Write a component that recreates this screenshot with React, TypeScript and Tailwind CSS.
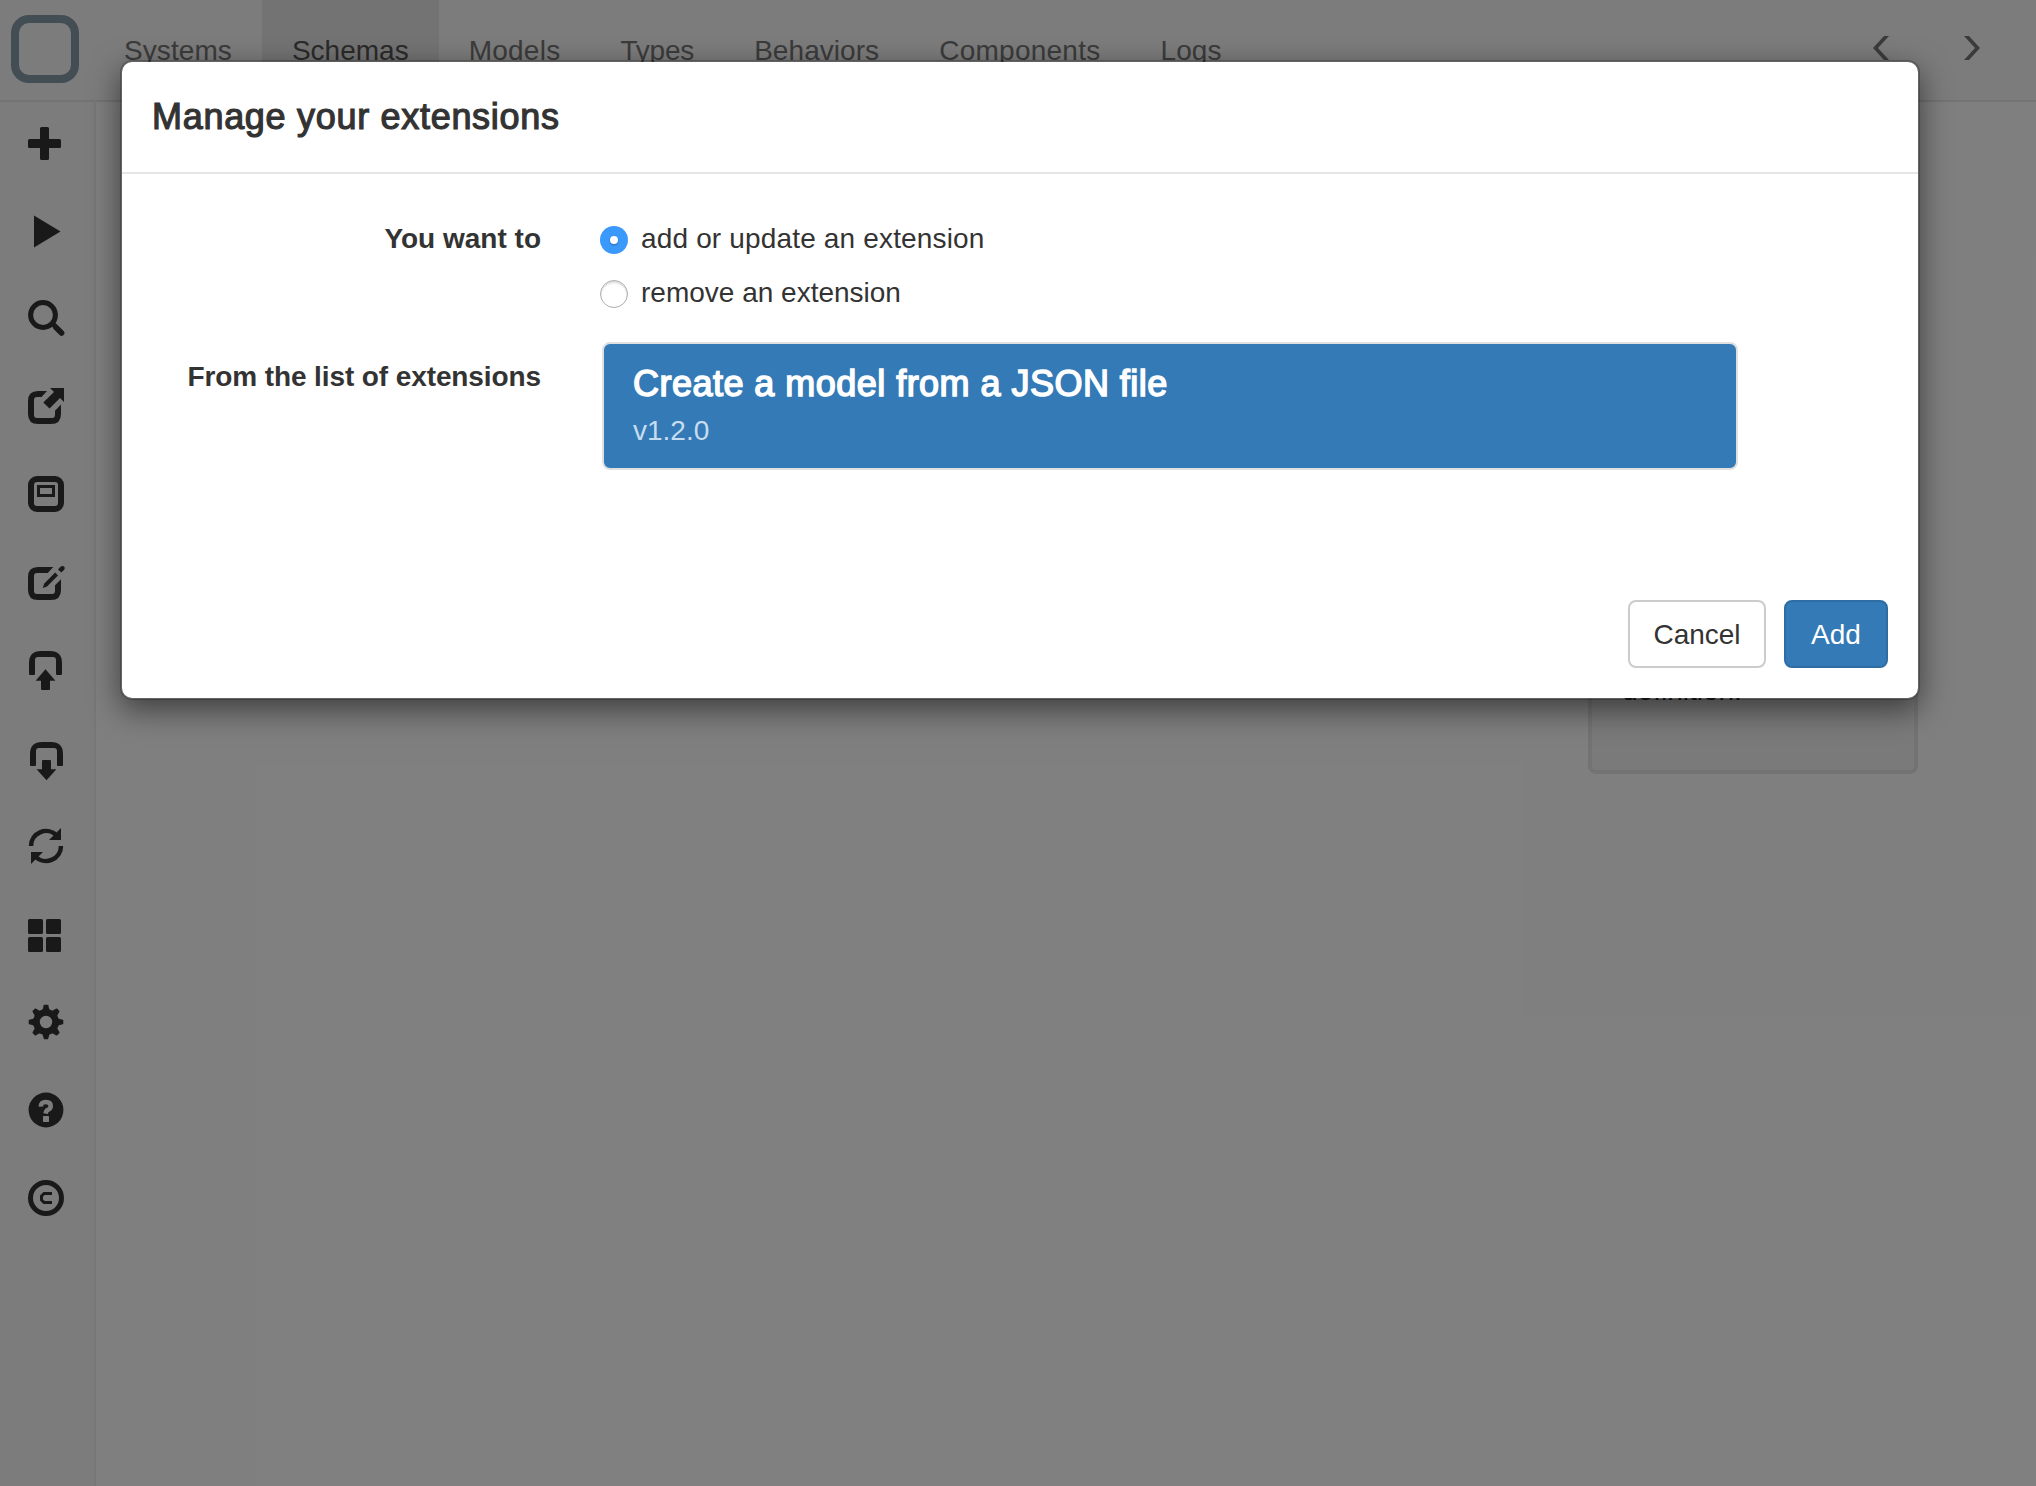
import React, { useState } from "react";

const INK = "#333";

const gearTeeth = [0, 45, 90, 135, 180, 225, 270, 315];

const icons: { label: string; drawing: React.ReactNode }[] = [
  {
    label: "New",
    drawing: (
      <>
        <rect x="18" y="7" width="9" height="33" rx="1.5" />
        <rect x="6" y="19" width="33" height="9" rx="1.5" />
      </>
    ),
  },
  { label: "Run", drawing: <path d="M12 7.5L38.5 23.5L12 39.5Z" /> },
  {
    label: "Search",
    drawing: (
      <>
        <circle cx="21" cy="19" r="12.4" fill="none" stroke={INK} strokeWidth="5" />
        <path d="M30 27L39.5 36.8" stroke={INK} strokeWidth="5" />
        <path d="M34 31.5L39.6 37" stroke={INK} strokeWidth="5.5" strokeLinecap="round" />
      </>
    ),
  },
  {
    label: "Export",
    drawing: (
      <>
        <path d="M25 7H16Q6 7 6 17V30Q6 40 16 40H29Q39 40 39 30V20.5L33 26.7V31Q33 34 30 34H15Q12 34 12 31V16Q12 13 15 13H19.5Z" />
        <path d="M28 4H42V18L38 14L27.5 24.5L21.3 18.5L32 8Z" />
      </>
    ),
  },
  {
    label: "Dialog",
    drawing: (
      <>
        <rect x="9" y="7" width="30" height="30" rx="6" fill="none" stroke={INK} strokeWidth="6" />
        <rect x="16.5" y="14.5" width="15" height="9" fill="none" stroke={INK} strokeWidth="3" />
      </>
    ),
  },
  {
    label: "Edit",
    drawing: (
      <>
        <path d="M31.3 7H16Q6 7 6 17V30Q6 40 16 40H29Q39 40 39 30V19.3L33 25.3V31Q33 34 30 34H15Q12 34 12 31V16Q12 13 15 13H25.7Z" />
        <path d="M20.7 28L22.3 23.6L33.2 12.6L36 15.6L25 26.5Z" />
        <path d="M36 9.6L38.8 6.6Q40.5 5.2 42.2 6.6Q43.4 8 42.2 9.8L39.3 12.6Z" />
      </>
    ),
  },
  {
    label: "Upload",
    drawing: (
      <>
        <path d="M7 26V15Q7 3 19 3H28Q40 3 40 15V26Q40 27 39 27H35Q34 27 34 26V12Q34 9 31 9H16Q13 9 13 12V26Q13 27 12 27H8Q7 27 7 26Z" />
        <path d="M23.5 21.3L33.4 32.8H28V41Q28 42 27 42H20Q19 42 19 41V32.8H13.6Z" />
      </>
    ),
  },
  {
    label: "Download",
    drawing: (
      <>
        <path d="M8 29V18Q8 6 20 6H29Q41 6 41 18V29Q41 30 40 30H36Q35 30 35 29V15Q35 12 32 12H17Q14 12 14 15V29Q14 30 13 30H9Q8 30 8 29Z" />
        <path d="M24.5 44.3L34.4 33.2H29V25Q29 24 28 24H21Q20 24 20 25V33.2H14.6Z" />
      </>
    ),
  },
  {
    label: "Refresh",
    drawing: (
      <>
        <path d="M9 22A15 15 0 0 1 35 11.8" fill="none" stroke={INK} strokeWidth="4.5" />
        <path d="M39 4V16H27Z" />
        <path d="M39 22A15 15 0 0 1 13 32.2" fill="none" stroke={INK} strokeWidth="4.5" />
        <path d="M9 40V28H21Z" />
      </>
    ),
  },
  {
    label: "Layout",
    drawing: (
      <>
        <rect x="6" y="7" width="15" height="15" rx="1.5" />
        <rect x="24" y="7" width="15" height="15" rx="1.5" />
        <rect x="6" y="25" width="15" height="15" rx="1.5" />
        <rect x="24" y="25" width="15" height="15" rx="1.5" />
      </>
    ),
  },
  {
    label: "Settings",
    drawing: (
      <>
        <circle cx="24" cy="22" r="9.6" fill="none" stroke={INK} strokeWidth="6.8" />
        {gearTeeth.map((angle) => (
          <path key={angle} d="M20.2 11L21.8 5.2Q22 4.7 22.6 4.7H25.4Q26 4.7 26.2 5.2L27.8 11Z" transform={`rotate(${angle} 24 22)`} />
        ))}
      </>
    ),
  },
  {
    label: "Help",
    drawing: (
      <>
        <circle cx="24" cy="22" r="17.4" />
        <path d="M19 18.6Q18.6 14 23.8 14Q28.7 14 28.7 18Q28.7 20.6 26.3 21.6Q24 22.4 23.6 25.6" fill="none" stroke="#f8f8f8" strokeWidth="4.6" />
        <rect x="21" y="28" width="6" height="6" rx="0.5" fill="#f8f8f8" />
      </>
    ),
  },
  {
    label: "Copyright",
    drawing: (
      <>
        <circle cx="24" cy="22" r="15.5" fill="none" stroke={INK} strokeWidth="5" />
        <path d="M30 17.5H22L19.5 20V24L22 26.5H30" fill="none" stroke={INK} strokeWidth="3" />
      </>
    ),
  },
];

const tabs = [
  { name: "Systems", tracking: "tracking-[0.08px]" },
  { name: "Schemas", tracking: "tracking-normal" },
  { name: "Models", tracking: "tracking-[0.25px]" },
  { name: "Types", tracking: "tracking-[-0.2px]" },
  { name: "Behaviors", tracking: "tracking-[0.06px]" },
  { name: "Components", tracking: "tracking-[0.25px]" },
  { name: "Logs", tracking: "tracking-[0.1px]" },
];

function NavBar() {
  return (
    <header className="flex h-[102px] shrink-0 items-start border-b-2 border-[#e7e7e7] bg-[#f8f8f8]">
      <div className="w-[94px] pt-[15px] pl-[11px]">
        <div className="size-[68px] rounded-[18px] border-8 border-[#869aa8]" />
      </div>
      <nav className="flex flex-1">
        {tabs.map(({ name, tracking }) => (
          <a
            key={name}
            className={`h-[100px] px-[30px] pt-[31px] ${tracking} ${
              name === "Schemas" ? "bg-[#e7e7e7] text-[#555]" : "text-[#777]"
            }`}
          >
            {name}
          </a>
        ))}
      </nav>
      <div className="flex gap-[75px] pt-9 pr-14">
        <svg width="16" height="24" fill="#777">
          <path d="M16 0H11L0 12L11 24H16L5 12Z" />
        </svg>
        <svg width="16" height="24" fill="#777">
          <path d="M0 0H5L16 12L5 24H0L11 12Z" />
        </svg>
      </div>
    </header>
  );
}

function SideBar() {
  return (
    <aside className="-mt-0.5 flex w-24 flex-col border-r-2 border-[#eee]">
      {icons.map((icon) => (
        <button key={icon.label} aria-label={icon.label} className="flex h-[88px] items-center pl-[22px]">
          <svg width="48" height="48" fill={INK}>
            {icon.drawing}
          </svg>
        </button>
      ))}
    </aside>
  );
}

function Radio({ text, tracking, checked, onSelect }: { text: string; tracking: string; checked: boolean; onSelect: () => void }) {
  return (
    <div role="radio" aria-checked={checked} onClick={onSelect} className="flex h-10 items-start gap-[13px]">
      {checked ? (
        <span className="mt-2 flex size-7 items-center justify-center rounded-full bg-[#3b99fc]">
          <span className="size-2 rounded-full bg-white shadow-[0_1px_2px_rgba(0,0,0,0.3)]" />
        </span>
      ) : (
        <span className="mt-2 size-7 rounded-full border border-[#adadad] bg-white shadow-[inset_0_2px_2px_rgba(0,0,0,0.14)]" />
      )}
      <span className={`pt-px ${tracking}`}>{text}</span>
    </div>
  );
}

function ExtensionsDialog() {
  const [mode, setMode] = useState("add");
  return (
    <section className="h-[640px] w-[1800px] rounded-xl border-2 border-black/20 bg-white bg-clip-padding shadow-[0_10px_30px_rgba(0,0,0,0.5)]">
      <h4 className="h-28 border-b-2 border-[#e5e5e5] px-[30px] pt-[29px] text-[36px] leading-[51px] tracking-[0.7px] [-webkit-text-stroke:1.2px_#333]">
        Manage your extensions
      </h4>
      <div className="flex h-[396px] flex-col px-[30px] pt-11">
        <div className="flex">
          <div className="w-[389px] pt-px text-right font-bold">You want to</div>
          <div className="ml-[59px] flex flex-col gap-3.5">
            <Radio text="add or update an extension" tracking="tracking-[0.16px]" checked={mode === "add"} onSelect={() => setMode("add")} />
            <Radio text="remove an extension" tracking="tracking-normal" checked={mode === "remove"} onSelect={() => setMode("remove")} />
          </div>
        </div>
        <div className="mt-[30px] flex">
          <div className="w-[389px] pt-[15px] text-right font-bold tracking-[-0.1px]">From the list of extensions</div>
          <div className="ml-[61px] h-32 w-[1136px] rounded-lg border-2 border-[#e0e0e0] bg-[#337ab7] px-[29px] pt-5 text-white">
            <div className="text-[36px] leading-10 tracking-[0.47px] [-webkit-text-stroke:1.5px_#fff]">Create a model from a JSON file</div>
            <div className="mt-[7px] text-[#c7ddef]">v1.2.0</div>
          </div>
        </div>
      </div>
      <footer className="flex justify-end gap-[18px] pt-[30px] pr-[30px]">
        <button className="h-[68px] w-[138px] rounded-lg border-2 border-[#ccc] bg-white pt-0.5">Cancel</button>
        <button className="h-[68px] w-[104px] rounded-lg border-2 border-[#2e6da4] bg-[#337ab7] pt-0.5 text-white">Add</button>
      </footer>
    </section>
  );
}

export default function App() {
  return (
    <div className="relative h-[1486px] w-[2036px] overflow-hidden bg-white font-['Liberation_Sans',Arial,sans-serif] text-[28px] leading-10 text-[#333]">
      <div className="flex h-full flex-col">
        <NavBar />
        <div className="flex flex-1 bg-white">
          <div className="flex bg-[#f8f8f8]">
            <SideBar />
          </div>
          <main className="flex flex-1 items-start justify-end pr-[118px]">
            <div className="flex h-[672px] w-[330px] flex-col justify-end rounded-lg border-4 border-[#e7e7e7] bg-[#f5f5f5] px-[30px] pb-[59px] text-[#333]">
              definition.
            </div>
          </main>
        </div>
      </div>
      <div className="absolute inset-0 bg-black/50" />
      <div className="absolute inset-0 flex justify-center pt-[60px] pl-1">
        <ExtensionsDialog />
      </div>
    </div>
  );
}
